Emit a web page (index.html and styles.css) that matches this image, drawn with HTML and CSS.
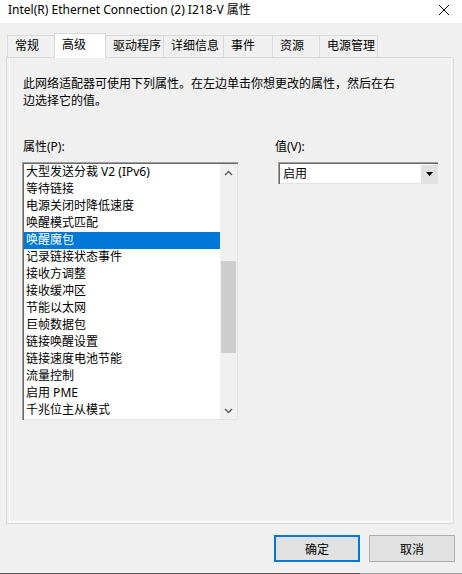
FILE: index.html
```html
<!DOCTYPE html>
<html lang="zh-CN">
<head>
    <meta charset="UTF-8"/>
    <title>Intel(R) Ethernet Connection (2) I218-V 属性</title>
    <link rel="stylesheet" href="styles.css">
</head>
<body>
<div class="window">
    <div class="titlebar">
        <span class="title">Intel(R) Ethernet Connection (2) I218-V 属性</span>
        <svg class="close" width="12" height="12" viewBox="0 0 12 12">
            <path d="M1 1 L11 11 M11 1 L1 11" stroke="#000" stroke-width="1" fill="none"/>
        </svg>
    </div>

    <div class="tabs">
        <div class="tab tab-general">常规</div>
        <div class="tab tab-advanced selected">高级</div>
        <div class="tab tab-driver">驱动程序</div>
        <div class="tab tab-details">详细信息</div>
        <div class="tab tab-events">事件</div>
        <div class="tab tab-resources">资源</div>
        <div class="tab tab-power last">电源管理</div>
    </div>

    <div class="panel">
        <p class="desc">此网络适配器可使用下列属性。在左边单击你想更改的属性，然后在右边选择它的值。</p>

        <div class="props">
            <div class="col-left">
                <div class="label">属性(P):</div>
                <div class="listbox">
                    <ul class="items">
                        <li>大型发送分裁 V2 (IPv6)</li>
                        <li>等待链接</li>
                        <li>电源关闭时降低速度</li>
                        <li>唤醒模式匹配</li>
                        <li class="active">唤醒魔包</li>
                        <li>记录链接状态事件</li>
                        <li>接收方调整</li>
                        <li>接收缓冲区</li>
                        <li>节能以太网</li>
                        <li>巨帧数据包</li>
                        <li>链接唤醒设置</li>
                        <li>链接速度电池节能</li>
                        <li>流量控制</li>
                        <li>启用 PME</li>
                        <li>千兆位主从模式</li>
                    </ul>
                    <div class="scrollbar">
                        <div class="arrow">
                            <svg width="9" height="6" viewBox="0 0 9 6"><path d="M1 5 L4.5 1.5 L8 5" stroke="#606060" stroke-width="1.5" fill="none"/></svg>
                        </div>
                        <div class="track"><div class="thumb"></div></div>
                        <div class="arrow">
                            <svg width="9" height="6" viewBox="0 0 9 6"><path d="M1 1 L4.5 4.5 L8 1" stroke="#606060" stroke-width="1.5" fill="none"/></svg>
                        </div>
                    </div>
                </div>
            </div>

            <div class="col-right">
                <div class="label">值(V):</div>
                <div class="select">
                    <span class="select-value">启用</span>
                    <span class="drop-btn">
                        <svg width="7" height="4" viewBox="0 0 7 4"><path d="M0 0 L7 0 L3.5 4 Z" fill="#000"/></svg>
                    </span>
                </div>
            </div>
        </div>
    </div>

    <div class="buttons">
        <button class="btn btn-default">确定</button>
        <button class="btn">取消</button>
    </div>
    <div class="bottom-line"></div>
</div>
</body>
</html>
```

FILE: styles.css
```css
body {
    margin: 0;
    background-color: #F0F0F0;
    font-family: "Noto Sans", "Noto Sans CJK SC", sans-serif;
    font-size: 12px;
    color: #000;
}
.window {
    width: 462px;
    height: 574px;
    display: flex;
    flex-direction: column;
    overflow: hidden;
}
.titlebar {
    height: 23px;
    background-color: #FFF;
    display: flex;
    justify-content: space-between;
    align-items: center;
    padding: 0 12px 4px 8px;
    box-sizing: border-box;
}
.title {
    font-size: 12px;
    line-height: 17px;
}
.close {
    display: block;
}

/* tabs */
.tabs {
    margin-top: 10px;
    height: 24px;
    padding-left: 7px;
    display: flex;
    align-items: flex-end;
}
.tab {
    box-sizing: border-box;
    height: 22px;
    line-height: 20px;
    padding-left: 7px;
    border-top: 1px solid #D9D9D9;
    border-left: 1px solid #D9D9D9;
    background-color: #F0F0F0;
    white-space: nowrap;
}
.tab.last {
    border-right: 1px solid #D9D9D9;
}
.tab.selected {
    height: 25px;
    margin-bottom: -1px;
    background-color: #FFF;
    border-right: 1px solid #D9D9D9;
    line-height: 21px;
    position: relative;
    z-index: 1;
}
.tab.selected + .tab {
    border-left: none;
}
.tab-general { width: 47px; }
.tab-advanced { width: 52px; }
.tab-driver { width: 57px; }
.tab-details { width: 60px; }
.tab-events { width: 49px; }
.tab-resources { width: 47px; }
.tab-power { width: 59px; }

/* page */
.panel {
    box-sizing: border-box;
    margin-left: 6px;
    width: 448px;
    height: 467px;
    border: 1px solid #D9D9D9;
    padding: 17px 14px 0 16px;
    box-shadow: inset 2px 0 #F0F0F0, inset 3px 0 #FFF,
                inset 0 -1px #F0F0F0, inset 0 -2px #FFF,
                inset -1px 0 #F0F0F0, inset -2px 0 #FFF;
}
.desc {
    margin: 0;
    width: 376px;
    line-height: 17px;
}
.props {
    display: flex;
    margin-top: 29px;
}
.label {
    line-height: 17px;
    height: 17px;
}
.col-left {
    width: 216px;
    margin-left: -1px;
}
.col-left .label {
    padding-left: 1px;
}
.col-right {
    margin-left: 37px;
}

/* list box */
.listbox {
    box-sizing: border-box;
    margin-top: 7px;
    width: 216px;
    height: 258px;
    padding: 2px 1px 1px 2px;
    background-color: #FFF;
    display: flex;
    box-shadow: inset 1px 1px #A0A0A0, inset 2px 2px #696969, inset -1px -1px #E3E3E3;
}
.items {
    list-style: none;
    margin: 0;
    padding: 0;
    flex: 1;
}
.items li {
    height: 17px;
    line-height: 16px;
    padding-left: 2px;
    white-space: nowrap;
}
.items li.active {
    background-color: #0078D7;
    color: #FFF;
}
.scrollbar {
    width: 17px;
    background-color: #F0F0F0;
    display: flex;
    flex-direction: column;
}
.arrow {
    height: 17px;
    display: flex;
    justify-content: center;
    align-items: center;
}
.arrow svg {
    display: block;
}
.track {
    flex: 1;
    padding-top: 80px;
}
.thumb {
    margin: 0 1px;
    height: 92px;
    background-color: #CDCDCD;
}

/* combo box */
.select {
    box-sizing: border-box;
    margin-top: 7px;
    margin-left: 3px;
    width: 160px;
    height: 22px;
    background-color: #FFF;
    display: flex;
    align-items: stretch;
    padding: 2px 1px 1px 2px;
    box-shadow: inset 1px 1px #A0A0A0, inset 2px 2px #696969, inset -1px -1px #E3E3E3;
}
.select-value {
    flex: 1;
    line-height: 19px;
    padding-left: 3px;
}
.drop-btn {
    width: 17px;
    background-color: #E1E1E1;
    border-left: 1px solid #FFF;
    border-top: 1px solid #FFF;
    box-sizing: border-box;
    display: flex;
    justify-content: center;
    align-items: center;
}
.drop-btn svg {
    display: block;
}

/* dialog buttons */
.buttons {
    display: flex;
    justify-content: flex-end;
    gap: 9px;
    margin-top: 11px;
    padding-right: 7px;
    height: 27px;
}
.btn {
    box-sizing: border-box;
    width: 86px;
    height: 27px;
    padding: 0;
    border: 1px solid #ADADAD;
    background-color: #E1E1E1;
    font-family: inherit;
    font-size: 12px;
    color: #000;
}
.btn-default {
    border: 2px solid #0078D7;
}
.bottom-line {
    margin-top: 11px;
    height: 1px;
    background: linear-gradient(to right, #5A5A5A 0, #5A5A5A 360px, #9A9A9A 360px);
}
```
